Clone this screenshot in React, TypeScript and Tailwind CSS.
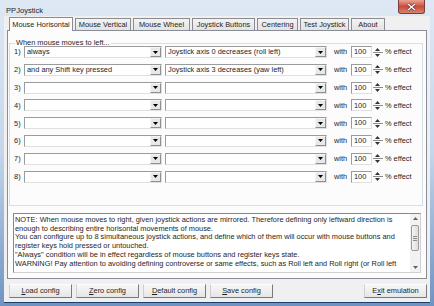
import React from "react";

// lignes de configuration de l'onglet "Mouse Horisontal"
const lignes = [
  { cond: "always", action: "Joystick axis 0 decreases (roll left)" },
  { cond: "and any Shift key pressed", action: "Joystick axis 3 decreases (yaw left)" },
  { cond: "", action: "" },
  { cond: "", action: "" },
  { cond: "", action: "" },
  { cond: "", action: "" },
  { cond: "", action: "" },
  { cond: "", action: "" },
];

// onglets avec leur largeur mesuree
const onglets = [
  { nom: "Mouse Horisontal", w: "w-[64px]" },
  { nom: "Mouse Vertical", w: "w-[56px]" },
  { nom: "Mouse Wheel", w: "w-[57px]" },
  { nom: "Joystick Buttons", w: "w-[63px]" },
  { nom: "Centering", w: "w-[41px]" },
  { nom: "Test Joystick", w: "w-[49px]" },
  { nom: "About", w: "w-[34px]" },
];

const note = [
  "NOTE: When mouse moves to right, given joystick actions are mirrored. Therefore defining only leftward direction is",
  "enough to describing entire horisontal movements of mouse.",
  "You can configure up to 8 simultaneous joystick actions, and define which of them will occur with mouse buttons and",
  "register keys hold pressed or untouched.",
  "\"Always\" condition will be in effect regardless of mouse buttons and register keys state.",
  "WARNING! Pay attention to avoiding defining controverse or same effects, such as Roll left and Roll right (or Roll left",
];

function FlecheBas() {
  return (
    <svg width="5" height="3" viewBox="0 0 5 3">
      <path d="M0 0h5L2.5 3z" fill="#000" />
    </svg>
  );
}

function Combo({ valeur, largeur }: { valeur: string; largeur: string }) {
  return (
    <div
      className={`flex h-[12px] ${largeur} border border-t-[#9a9b9b] border-l-[#9a9b9b] border-b-[#e0e0e0] border-r-[#e0e0e0] bg-white`}
    >
      <div className="flex-1 overflow-hidden whitespace-nowrap pl-[2px] leading-[10px]">
        {valeur}
      </div>
      <div className="flex h-full w-[11px] items-center justify-center border border-l-[#f6f6f6] border-t-[#f6f6f6] border-r-[#8f8f8f] border-b-[#8f8f8f] bg-[#e8e8e8]">
        <FlecheBas />
      </div>
    </div>
  );
}

function Spin() {
  return (
    <div className="flex h-[12px] w-[11px] flex-col items-center justify-center gap-[1px]">
      <svg width="5" height="3" viewBox="0 0 5 3">
        <path d="M0 3h5L2.5 0z" fill="#333" />
      </svg>
      <div className="h-px w-[10px] bg-[#8a8a8a]" />
      <svg width="5" height="3" viewBox="0 0 5 3">
        <path d="M0 0h5L2.5 3z" fill="#333" />
      </svg>
    </div>
  );
}

function Bouton({ children, className = "" }: { children: React.ReactNode; className?: string }) {
  return (
    <div
      className={`flex h-[14px] w-[63px] items-center justify-center border border-t-[#fdfdfd] border-l-[#cfcfcf] border-b-[#7a7a7a] border-r-[#7a7a7a] bg-gradient-to-b from-[#f7f7f7] to-[#e6e6e6] leading-none ${className}`}
    >
      {children}
    </div>
  );
}

export default function App() {
  return (
    <div
      className="flex h-[306px] w-[434px] flex-col overflow-hidden bg-gradient-to-b from-[#dfe9f5] via-[#c4d6eb] to-[#6f93c2] text-[7.4px] text-[#1e1e1e]"
      style={{ fontFamily: '"Liberation Sans", Arial, sans-serif' }}
    >
      {/* barre de titre */}
      <div className="flex h-[16px] shrink-0 items-start">
        <div className="pl-[6px] pt-[7px] text-[7.6px] leading-none">PPJoystick</div>
        <div className="ml-auto mr-[9px] flex h-[14px] w-[27px] items-center justify-center rounded-b-[3px] border border-t-0 border-[#7a3c3c] bg-gradient-to-b from-[#e8a394] via-[#c84c3c] to-[#d9826c]">
          <svg width="9" height="8" viewBox="0 0 9 8">
            <path d="M1 1l7 6M8 1L1 7" stroke="#5a2a2a" strokeWidth="2.6" />
            <path d="M1 1l7 6M8 1L1 7" stroke="#fff" strokeWidth="1.5" />
          </svg>
        </div>
      </div>

      {/* zone client */}
      <div className="mx-[4px] mb-[4px] flex flex-1 flex-col bg-[#f0f0f0] px-[3px] shadow-[0_1px_0_#1d3f6b]">
        {/* onglets */}
        <div className="flex h-[14px] items-end gap-[2px] pl-[2px]">
          {onglets.map((o, i) =>
            i === 0 ? (
              <div
                key={o.nom}
                className={`relative -mb-px flex h-[14px] ${o.w} items-center justify-center border border-b-0 border-[#898c95] bg-[#fcfcfc] leading-none`}
              >
                {o.nom}
              </div>
            ) : (
              <div
                key={o.nom}
                className={`flex h-[12px] ${o.w} items-center justify-center border border-b-0 border-[#898c95] bg-gradient-to-b from-[#f3f3f3] to-[#e3e3e3] leading-none`}
              >
                {o.nom}
              </div>
            )
          )}
        </div>

        {/* page de l'onglet */}
        <div className="flex h-[249px] flex-col border border-[#898c95] bg-[#fcfcfc] pb-[5px] pl-px pr-[3px] pt-[8px]">
          <fieldset className="h-[167px] border border-[#d5dfe5] px-[3px] pt-0">
            <legend className="ml-[2px] px-px leading-[8px]">When mouse moves to left...</legend>
            <div className="-mt-px flex flex-col gap-[5.8px]">
              {lignes.map((l, i) => (
                <div key={i} className="flex h-[12px] items-center">
                  <div className="w-[11px] pl-px">{i + 1})</div>
                  <Combo valeur={l.cond} largeur="w-[138px]" />
                  <div className="w-[3px]" />
                  <Combo valeur={l.action} largeur="w-[162px]" />
                  <div className="w-[24px] pl-[7px]">with</div>
                  <div className="flex h-[12px] w-[21px] items-center border border-t-[#9a9b9b] border-l-[#9a9b9b] border-b-[#e0e0e0] border-r-[#e0e0e0] bg-white pl-[2px] leading-none">
                    100
                  </div>
                  <Spin />
                  <div className="pl-[2px]">% effect</div>
                </div>
              ))}
            </div>
          </fieldset>

          <div className="mt-auto ml-[4px] mr-[2px] flex h-[60px] border border-t-[#828790] border-l-[#828790] border-b-[#d0d0d0] border-r-[#d0d0d0] bg-white">
            <div className="flex-1 overflow-hidden pl-px pt-[2px] leading-[8.7px]">
              {note.map((t) => (
                <div key={t} className="whitespace-nowrap">
                  {t}
                </div>
              ))}
            </div>
            <div className="flex w-[10px] flex-col items-center bg-[#f2f2f2] py-[3px]">
              <svg width="5" height="3" viewBox="0 0 5 3">
                <path d="M0 3h5L2.5 0z" fill="#606060" />
              </svg>
              <div className="mt-[5px] flex h-[26px] w-[8px] items-center justify-center rounded-[2px] border border-[#9a9a9a] bg-gradient-to-r from-[#f4f4f4] to-[#dedede]">
                <div className="flex flex-col gap-px">
                  <div className="h-px w-[4px] bg-[#8a8a8a]" />
                  <div className="h-px w-[4px] bg-[#8a8a8a]" />
                  <div className="h-px w-[4px] bg-[#8a8a8a]" />
                </div>
              </div>
              <div className="mt-auto">
                <svg width="5" height="3" viewBox="0 0 5 3">
                  <path d="M0 0h5L2.5 3z" fill="#606060" />
                </svg>
              </div>
            </div>
          </div>
        </div>

        {/* boutons */}
        <div className="mt-[5px] flex gap-[4px] pl-[2px]">
          <Bouton>
            <span className="underline">L</span>oad config
          </Bouton>
          <Bouton>
            <span className="underline">Z</span>ero config
          </Bouton>
          <Bouton>
            <span className="underline">D</span>efault config
          </Bouton>
          <Bouton>
            <span className="underline">S</span>ave config
          </Bouton>
          <Bouton className="ml-auto">
            E<span className="underline">x</span>it emulation
          </Bouton>
        </div>
      </div>
    </div>
  );
}
